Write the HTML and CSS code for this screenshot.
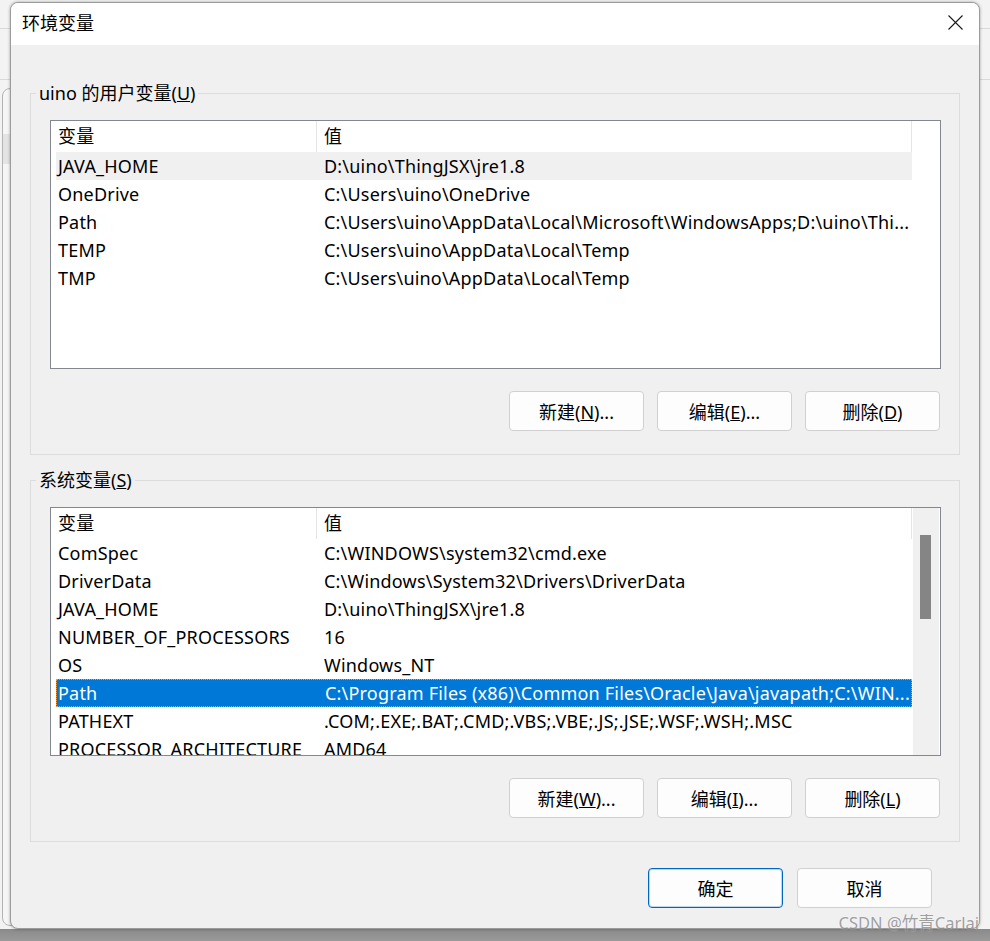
FILE: index.html
```html
<!DOCTYPE html>
<html lang="zh-CN">
<head>
    <meta charset="UTF-8">
    <meta name="viewport" content="width=device-width, initial-scale=1.0">
    <title>环境变量</title>
    <link rel="stylesheet" href="styles.css">
</head>
<body>
    <div class="desk">
        <div class="back-window"></div>

        <div class="dialog">
            <div class="titlebar">
                <span class="title">环境变量</span>
                <button class="close" aria-label="关闭">
                    <svg width="15" height="15" viewBox="0 0 15 15">
                        <path d="M0.5 0.5 L14.5 14.5 M14.5 0.5 L0.5 14.5" stroke="#1a1a1a" stroke-width="1.1" fill="none"/>
                    </svg>
                </button>
            </div>

            <div class="content">
                <!-- user variables -->
                <fieldset class="group">
                    <legend>uino 的用户变量(<u>U</u>)</legend>
                    <div class="listview">
                        <div class="list-main">
                            <div class="list-head">
                                <div class="cell name">变量</div>
                                <div class="cell value">值</div>
                            </div>
                            <div class="row hot">
                                <div class="cell name">JAVA_HOME</div>
                                <div class="cell value">D:\uino\ThingJSX\jre1.8</div>
                            </div>
                            <div class="row">
                                <div class="cell name">OneDrive</div>
                                <div class="cell value">C:\Users\uino\OneDrive</div>
                            </div>
                            <div class="row">
                                <div class="cell name">Path</div>
                                <div class="cell value">C:\Users\uino\AppData\Local\Microsoft\WindowsApps;D:\uino\Thi...</div>
                            </div>
                            <div class="row">
                                <div class="cell name">TEMP</div>
                                <div class="cell value">C:\Users\uino\AppData\Local\Temp</div>
                            </div>
                            <div class="row">
                                <div class="cell name">TMP</div>
                                <div class="cell value">C:\Users\uino\AppData\Local\Temp</div>
                            </div>
                        </div>
                        <div class="list-side"></div>
                    </div>
                    <div class="btn-row">
                        <button class="btn">新建(<u>N</u>)...</button>
                        <button class="btn">编辑(<u>E</u>)...</button>
                        <button class="btn">删除(<u>D</u>)</button>
                    </div>
                </fieldset>

                <!-- system variables -->
                <fieldset class="group">
                    <legend>系统变量(<u>S</u>)</legend>
                    <div class="listview">
                        <div class="list-main">
                            <div class="list-head">
                                <div class="cell name">变量</div>
                                <div class="cell value">值</div>
                            </div>
                            <div class="row">
                                <div class="cell name">ComSpec</div>
                                <div class="cell value">C:\WINDOWS\system32\cmd.exe</div>
                            </div>
                            <div class="row">
                                <div class="cell name">DriverData</div>
                                <div class="cell value">C:\Windows\System32\Drivers\DriverData</div>
                            </div>
                            <div class="row">
                                <div class="cell name">JAVA_HOME</div>
                                <div class="cell value">D:\uino\ThingJSX\jre1.8</div>
                            </div>
                            <div class="row">
                                <div class="cell name">NUMBER_OF_PROCESSORS</div>
                                <div class="cell value">16</div>
                            </div>
                            <div class="row">
                                <div class="cell name">OS</div>
                                <div class="cell value">Windows_NT</div>
                            </div>
                            <div class="row selected">
                                <div class="cell name">Path</div>
                                <div class="cell value">C:\Program Files (x86)\Common Files\Oracle\Java\javapath;C:\WIN...</div>
                            </div>
                            <div class="row">
                                <div class="cell name">PATHEXT</div>
                                <div class="cell value">.COM;.EXE;.BAT;.CMD;.VBS;.VBE;.JS;.JSE;.WSF;.WSH;.MSC</div>
                            </div>
                            <div class="row">
                                <div class="cell name">PROCESSOR_ARCHITECTURE</div>
                                <div class="cell value">AMD64</div>
                            </div>
                        </div>
                        <div class="list-side scrollbar">
                            <div class="thumb"></div>
                        </div>
                    </div>
                    <div class="btn-row">
                        <button class="btn">新建(<u>W</u>)...</button>
                        <button class="btn">编辑(<u>I</u>)...</button>
                        <button class="btn">删除(<u>L</u>)</button>
                    </div>
                </fieldset>

                <div class="actions">
                    <button class="btn default">确定</button>
                    <button class="btn">取消</button>
                </div>
            </div>
        </div>

        <div class="watermark">CSDN @竹青Carlai</div>
    </div>
</body>
</html>
```

FILE: styles.css
```css
body {
    margin: 0;
    padding: 0;
    font-family: "Noto Sans", "Noto Sans CJK SC", sans-serif;
    font-size: 18px;
    letter-spacing: 0.2px;
    color: #000;
    background-color: #f3f3f3;
}
.desk {
    position: relative;
    width: 990px;
    height: 941px;
    overflow: hidden;
    padding: 2px 0 0 10px;
    box-sizing: border-box;
    background:
        linear-gradient(to bottom, transparent 929px, #8a8a8a 929px, #9a9a9a 941px),
        linear-gradient(to bottom, transparent 28px, #d9d9d9 28px, #d9d9d9 29px, transparent 29px, transparent 79px, #d9d9d9 79px, #d9d9d9 80px, transparent 80px),
        #f3f3f3;
}
/* window peeking out behind the dialog */
.back-window {
    position: absolute;
    left: 2px;
    top: 88px;
    width: 200px;
    height: 836px;
    border: 1px solid #b4b4b4;
    border-radius: 8px;
    background: linear-gradient(to bottom, #f6f6f6 45px, #e4e4e4 45px, #e4e4e4 75px, #f6f6f6 75px);
}
.dialog {
    position: relative;
    width: 970px;
    box-sizing: border-box;
    border: 1px solid #9c9c9c;
    border-radius: 8px;
    background-color: #f0f0f0;
    box-shadow: 0 0 3px rgba(0, 0, 0, 0.35);
    overflow: hidden;
}
.titlebar {
    height: 42px;
    background-color: #fff;
    display: flex;
    align-items: center;
    justify-content: space-between;
    padding: 0 16px 0 11px;
}
.title {
    font-size: 18px;
    letter-spacing: 0;
    margin-top: -4px;
}
.close {
    border: none;
    background: none;
    padding: 0;
    width: 15px;
    height: 15px;
    margin-top: -4px;
    display: flex;
}
.content {
    padding: 0 19px 20px 19px;
}
.group {
    margin: 36px 0 0 0;
    padding: 15px 18px 23px 19px;
    border: 1px solid #dcdcdc;
}
.group + .group {
    margin-top: 13px;
}
.group legend {
    padding: 0 3px;
    margin-left: -14px;
    line-height: 24px;
    letter-spacing: 0;
}
.listview {
    display: flex;
    height: 249px;
    box-sizing: border-box;
    border: 1px solid #828790;
    background-color: #fff;
    overflow: hidden;
}
.list-main {
    width: 861px;
    padding-left: 5px;
    box-sizing: border-box;
}
.list-side {
    flex: 1;
}
.scrollbar {
    background-color: #f0f0f0;
    border-left: 1px solid #fff;
    border-right: 1px solid #fff;
    padding: 27px 0 0 7px;
}
.thumb {
    width: 11px;
    height: 84px;
    background-color: #858585;
}
.list-head {
    display: flex;
    height: 31px;
    align-items: stretch;
    border-right: 1px solid #e5e5e5;
}
.list-head .cell {
    line-height: 31px;
}
.list-head .name {
    border-right: 1px solid #e5e5e5;
}
.row {
    display: flex;
    height: 28px;
    line-height: 28px;
    box-sizing: border-box;
}
.cell {
    white-space: nowrap;
    overflow: hidden;
    text-overflow: ellipsis;
}
.cell.name {
    width: 261px;
    padding-left: 2px;
    box-sizing: border-box;
    flex-shrink: 0;
}
.cell.value {
    flex: 1;
    padding-left: 7px;
}
.row.hot {
    background-color: #f0f0f0;
}
.row.selected {
    background-color: #0078d7;
    color: #fff;
    border: 1px dotted #f59a3c;
    line-height: 26px;
}
.row.selected .name {
    padding-left: 1px;
}
.row.selected .value {
    padding-left: 7px;
}
.btn-row {
    display: flex;
    justify-content: flex-end;
    gap: 13px;
    margin-top: 22px;
    padding-right: 1px;
}
.btn {
    width: 135px;
    height: 40px;
    box-sizing: border-box;
    border: 1px solid #d0d0d0;
    border-radius: 4px;
    background-color: #fdfdfd;
    font-family: inherit;
    font-size: 18px;
    letter-spacing: 0;
    color: #000;
    padding: 0;
}
.btn.default {
    border: 1px solid #0067c0;
    box-shadow: inset 0 0 0 1px rgba(0, 103, 192, 0.25);
}
.actions {
    display: flex;
    justify-content: flex-end;
    gap: 14px;
    margin-top: 26px;
    padding-right: 28px;
}
.watermark {
    position: absolute;
    right: 11px;
    bottom: 7px;
    font-size: 16.5px;
    letter-spacing: 0;
    color: rgba(120, 120, 120, 0.7);
    text-shadow: 0 0 2px rgba(255, 255, 255, 0.6);
}
```
